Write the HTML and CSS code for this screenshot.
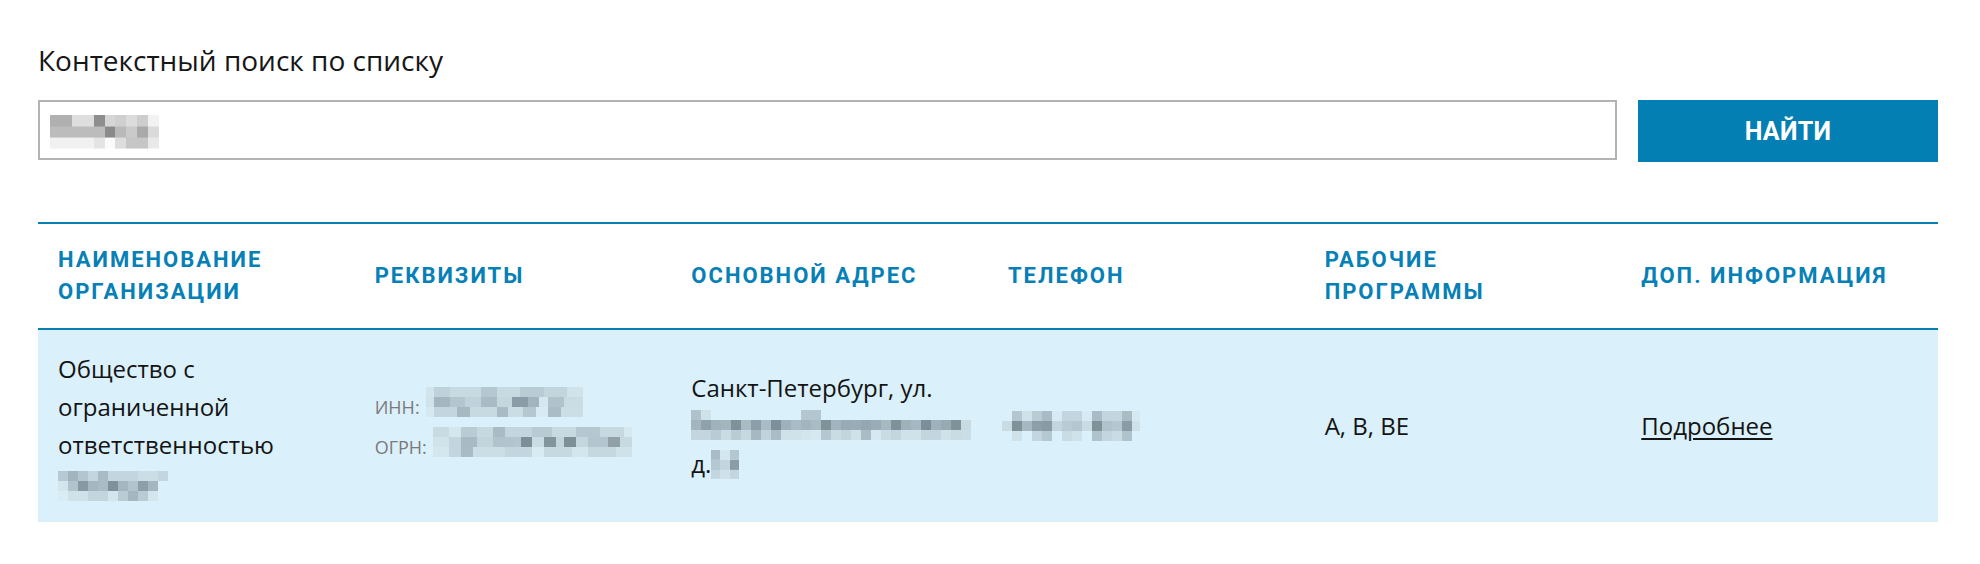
FILE: index.html
```html
<!DOCTYPE html>
<html lang="ru">
<head>
<meta charset="utf-8">
<title>Контекстный поиск по списку</title>
<link rel="stylesheet" href="styles.css">
</head>
<body>
<main class="page">
  <h1 class="title">Контекстный поиск по списку</h1>
  <form class="search" onsubmit="return false">
    <div class="search-field"><span class="mosaic mosaic--query"></span></div>
    <button class="search-btn" type="submit">НАЙТИ</button>
  </form>
  <table class="orgs">
    <thead>
      <tr>
        <th>Наименование организации</th>
        <th>Реквизиты</th>
        <th>Основной адрес</th>
        <th>Телефон</th>
        <th>Рабочие программы</th>
        <th>Доп. информация</th>
      </tr>
    </thead>
    <tbody>
      <tr>
        <td>Общество с ограниченной ответственностью <span class="mosaic mosaic--name"></span></td>
        <td>
          <div class="req"><span class="req-label">ИНН:</span> <span class="mosaic mosaic--inn"></span></div>
          <div class="req"><span class="req-label">ОГРН:</span> <span class="mosaic mosaic--ogrn"></span></div>
        </td>
        <td>Санкт-Петербург, ул.<br><span class="mosaic mosaic--street"></span><br>д.<span class="mosaic mosaic--house"></span></td>
        <td><span class="mosaic mosaic--phone"></span></td>
        <td>A, B, BE</td>
        <td><a class="more" href="#">Подробнее</a></td>
      </tr>
    </tbody>
  </table>
</main>
</body>
</html>
```

FILE: styles.css
```css
html, body {
  margin: 0;
  padding: 0;
  background: #ffffff;
}

body {
  font-family: "Open Sans", "Noto Sans", sans-serif;
  color: #141414;
}

.page {
  width: 1900px;
  padding: 41px 0 0 38px;
}

.title {
  margin: 0;
  font-size: 28px;
  line-height: 38px;
  font-weight: 400;
  color: #161616;
}

.search {
  display: flex;
  align-items: flex-start;
  gap: 21px;
  margin: 21px 0 0;
}

.search-field {
  flex: 1;
  box-sizing: border-box;
  height: 60px;
  border: 2px solid #b3b3b3;
  background: #fff;
  display: flex;
  align-items: center;
  padding: 4px 0 0 10px;
}

.search-btn {
  width: 300px;
  height: 62px;
  border: 0;
  margin: 0;
  padding: 0;
  background: #037fb3;
  color: #ffffff;
  font-family: Roboto, "Open Sans", sans-serif;
  font-weight: 700;
  font-size: 25px;
  letter-spacing: 0.3px;
  cursor: pointer;
}

.orgs {
  width: 1900px;
  margin-top: 60px;
  border-collapse: collapse;
  table-layout: fixed;
}

.orgs th {
  border-top: 2px solid #0a7fb1;
  border-bottom: 2px solid #0a7fb1;
  padding: 20px 30px 20px 20px;
  text-align: left;
  vertical-align: middle;
  font-family: Roboto, "Open Sans", sans-serif;
  font-weight: 700;
  font-size: 22px;
  line-height: 32px;
  letter-spacing: 2px;
  text-transform: uppercase;
  color: #0680b6;
}

.orgs td {
  background: #daf0fa;
  padding: 20px 8px 20px 20px;
  vertical-align: middle;
  font-size: 24px;
  line-height: 38px;
  color: #141414;
}

.req {
  line-height: 37px;
  white-space: nowrap;
}

.req-label {
  font-size: 18px;
  color: #7a7a7a;
}

.more {
  color: #141414;
  text-decoration: underline;
  text-underline-offset: 3px;
}

/* pixelated (hidden) values */
.mosaic {
  display: inline-block;
  height: 30px;
  vertical-align: -5px;
  background-repeat: no-repeat;
  background-size: 100% 34%;
  background-position: 0 0, 0 50%, 0 100%;
}

.mosaic--query {
  width: 109px;
  height: 34px;
  background-image:
    linear-gradient(90deg, #b0b0b0 0 20%, #dedede 20% 40%, #8e8e8e 40% 50%, #d6d6d6 50% 60%, #cfcfcf 60% 70%, #dcdcdc 70% 80%, #cdcdcd 80% 90%, #f2f2f2 90% 100%),
    linear-gradient(90deg, #bcbcbc 0 50%, #8a8a8a 50% 60%, #b9b9b9 60% 70%, #cacaca 70% 80%, #a9a9a9 80% 90%, #dadada 90% 100%),
    linear-gradient(90deg, #f1f1f1 0 40%, #e4e4e4 40% 50%, #fbfbfb 50% 60%, #dddddd 60% 70%, #c6c6c6 70% 90%, #e9e9e9 90% 100%);
}

.mosaic--name {
  width: 110px;
  vertical-align: -9px;
  background-image:
    linear-gradient(90deg, #b7c9d2 0 10px, #a2b4bd 10px 20px, #b3c5ce 20px 30px, #c3d5de 30px 40px, #a9bbc4 40px 50px, #c3d5de 50px 80px, #cbdde5 80px 100px, #c3d5de 100px 110px),
    linear-gradient(90deg, #d3e5ed 0 10px, #b1c3cc 10px 20px, #869aa2 20px 30px, #a4b6bf 30px 40px, #a9bbc4 40px 50px, #7f9199 50px 60px, #a4b6bf 60px 70px, #b1c3cc 70px 80px, #8d9fa8 80px 90px, #a4b6bf 90px 100px, #daf0fa 100px 110px),
    linear-gradient(90deg, #d8ecf5 0 10px, #cfe1e9 10px 30px, #c3d5de 30px 50px, #d3e5ed 50px 60px, #b9cbd4 60px 70px, #a4b6bf 70px 80px, #b9cbd4 80px 90px, #d3e5ed 90px 100px, #daf0fa 100px 110px);
}

.mosaic--inn {
  width: 157px;
  vertical-align: -3px;
  background-image:
    linear-gradient(90deg, #d2e4ec 0 5%, #bfd1da 5% 15%, #c7d9e1 15% 35%, #b5c7d0 35% 45%, #c7d9e1 45% 60%, #b9cbd4 60% 75%, #c2d4dc 75% 90%, #d0e2ea 90% 100%),
    linear-gradient(90deg, #d0e2ea 0 5%, #a4b6bf 5% 15%, #b3c5ce 15% 25%, #c0d2db 25% 35%, #a9bbc4 35% 45%, #c4d6de 45% 55%, #8a9ca5 55% 65%, #a2b4bd 65% 72%, #d5e7ef 72% 78%, #b0c2cb 78% 88%, #c9dbe3 88% 100%),
    linear-gradient(90deg, #d6e8f0 0 5%, #c3d5de 5% 20%, #a6b8c1 20% 28%, #c7d9e1 28% 45%, #a9bbc4 45% 52%, #cadce4 52% 62%, #b5c7d0 62% 70%, #d8eaf2 70% 78%, #aabcc5 78% 86%, #cbdde5 86% 100%);
}

.mosaic--ogrn {
  width: 199px;
  vertical-align: -3px;
  background-image:
    linear-gradient(90deg, #c8dae2 0 8%, #d4e6ee 8% 14%, #b9cbd4 14% 22%, #c6d8e0 22% 30%, #a9bbc4 30% 36%, #c3d5de 36% 50%, #b8cad3 50% 60%, #c7d9e1 60% 72%, #b5c7d0 72% 84%, #c6d8e0 84% 96%, #d6e8f0 96% 100%),
    linear-gradient(90deg, #d0e2ea 0 8%, #c3d5de 8% 14%, #a8bac3 14% 22%, #c2d4dc 22% 30%, #b1c3cc 30% 40%, #b4c6cf 40% 44%, #7c8e96 44% 50%, #c9dbe3 50% 56%, #82949c 56% 62%, #c2d4dc 62% 66%, #7d8f97 66% 72%, #c4d6de 72% 78%, #b3c5ce 78% 88%, #919fa7 88% 94%, #c7d9e1 94% 100%),
    linear-gradient(90deg, #d4e6ee 0 8%, #c3d5de 8% 14%, #a9bbc4 14% 20%, #cbdde5 20% 36%, #c3d5de 36% 50%, #d8eaf2 50% 56%, #c6d8e0 56% 70%, #d3e5ed 70% 78%, #c5d7df 78% 92%, #cfe1e9 92% 100%);
}

.mosaic--street {
  width: 280px;
  background-image:
    linear-gradient(90deg, #b0c2cb 0 10px, #cfe1e9 10px 20px, #daf0fa 20px 110px, #b4c6cf 110px 130px, #daf0fa 130px 280px),
    linear-gradient(90deg, #a3b5be 0 10px, #8fa1aa 10px 20px, #a0b2bb 20px 30px, #a3b5be 30px 40px, #7f9199 40px 50px, #a9bbc4 50px 60px, #8c9ea7 60px 70px, #aabcc5 70px 80px, #7d8f98 80px 90px, #9fb1ba 90px 100px, #a9bbc4 100px 110px, #a3b5be 110px 120px, #a9bbc4 120px 130px, #7f9199 130px 140px, #a2b4bd 140px 150px, #98aab3 150px 160px, #9aacb5 160px 170px, #95a7b0 170px 180px, #9aacb5 180px 190px, #a6b8c1 190px 200px, #7f9199 200px 210px, #9fb1ba 210px 220px, #a6b8c1 220px 230px, #7c8e97 230px 240px, #9fb1ba 240px 250px, #97a9b2 250px 260px, #7f9199 260px 270px, #c8dae2 270px 280px),
    linear-gradient(90deg, #c3d5de 0 20px, #b9cbd4 20px 30px, #c9dbe3 30px 40px, #b9cbd4 40px 50px, #c6d8e0 50px 60px, #a6b8c1 60px 70px, #c1d3dc 70px 80px, #aabcc5 80px 90px, #cfe1e9 90px 110px, #d3e5ed 110px 120px, #d6e8f0 120px 130px, #b5c7d0 130px 140px, #c9dbe3 140px 150px, #c3d5de 150px 160px, #cfe1e9 160px 170px, #aabcc5 170px 180px, #d6e8f0 180px 190px, #c9dbe3 190px 200px, #c3d5de 200px 210px, #cfe1e9 210px 230px, #c3d5de 230px 250px, #cfe1e9 250px 260px, #c9dbe3 260px 270px, #cbdde5 270px 280px);
}

.mosaic--house {
  width: 28px;
  height: 29px;
  vertical-align: -6px;
  background-image:
    linear-gradient(90deg, #a9bbc4 0 9px, #d3e7f1 9px 19px, #b4c6cf 19px 28px),
    linear-gradient(90deg, #b5c7d0 0 9px, #c3d5de 9px 19px, #8a9ca5 19px 28px),
    linear-gradient(90deg, #c3d5de 0 9px, #cfe1e9 9px 19px, #c3d5de 19px 28px);
}

.mosaic--phone {
  display: block;
  width: 138px;
  margin-left: -6px;
  background-image:
    linear-gradient(90deg, #daf0fa 0 10px, #b4c6cf 10px 20px, #cfe1e9 20px 30px, #b9cbd4 30px 40px, #a9bbc4 40px 50px, #d6ebf5 50px 60px, #c3d5de 60px 80px, #d6ebf5 80px 90px, #a9bbc4 90px 100px, #c3d5de 100px 120px, #a9bbc4 120px 130px, #d6e8f0 130px 138px),
    linear-gradient(90deg, #c9dbe3 0 10px, #7f9199 10px 20px, #a6b8c1 20px 30px, #8d9fa8 30px 40px, #899ba4 40px 50px, #c3d5de 50px 60px, #b9cbd4 60px 70px, #b5c7d0 70px 80px, #c9dbe3 80px 90px, #7f9199 90px 100px, #b0c2cb 100px 110px, #b5c7d0 110px 120px, #899ba4 120px 130px, #cfe1e9 130px 138px),
    linear-gradient(90deg, #daf0fa 0 10px, #cfe1e9 10px 20px, #daf0fa 20px 30px, #c3d5de 30px 40px, #b5c7d0 40px 50px, #daf0fa 50px 60px, #c9dbe3 60px 70px, #cfe1e9 70px 80px, #daf0fa 80px 90px, #b0c2cb 90px 100px, #c3d5de 100px 110px, #c9dbe3 110px 120px, #b0c2cb 120px 130px, #daf0fa 130px 138px);
}
```
